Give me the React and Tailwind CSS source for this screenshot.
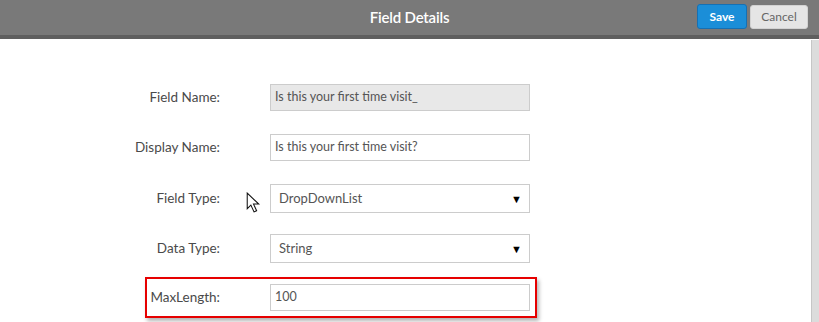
const rows = [
  { label: 'Field Name:', value: 'Is this your first time visit_', kind: 'readonly' },
  { label: 'Display Name:', value: 'Is this your first time visit?', kind: 'text' },
  { label: 'Field Type:', value: 'DropDownList', kind: 'select' },
  { label: 'Data Type:', value: 'String', kind: 'select' },
];

function Cursor() {
  return (
    <svg width="15" height="23" viewBox="0 0 14 22" className="absolute left-[-25px] top-[7px]">
      <path d="M1 1 L1 16 L4.5 12.5 L7.5 19 L10 18 L7 11.5 L12 11.5 Z" fill="#fff" stroke="#111" strokeWidth="1" strokeLinejoin="miter" />
    </svg>
  );
}

function Field({ row, index }) {
  if (row.kind === 'select') {
    return (
      <div className="relative flex items-center w-[260px] h-[29px] mt-[3px] border border-[#cccccc] bg-white pl-[8px] pr-[7px]">
        {index === 2 && <Cursor />}
        <span className="flex-1 text-[13px] text-[#555]">{row.value}</span>
        <span className="text-[11px] text-black leading-none">▼</span>
      </div>
    );
  }
  return (
    <div className={`flex items-center w-[260px] h-[27px] border border-[#cccccc] pl-[4px] text-[12.5px] text-[#555] ${row.kind === 'readonly' ? 'bg-[#e8e8e8]' : 'bg-white'}`}>
      {row.value}
    </div>
  );
}

export default function App() {
  return (
    <div className="w-[819px] h-[322px] overflow-hidden bg-white flex flex-col" style={{ fontFamily: 'Lato, "Open Sans", sans-serif' }}>
      {/* Header */}
      <div className="flex items-center h-[35px] bg-[#797979] relative shrink-0">
        <div className="flex-1 text-center text-white text-[15px] font-semibold tracking-[-0.2px]">Field Details</div>
        <div className="absolute right-[11px] top-[4px] flex gap-[3px]">
          <button className="w-[50px] h-[25px] rounded-[3px] bg-[#1b8ed8] border border-[#1670b3] text-white text-[12px] font-bold">Save</button>
          <button className="w-[58px] h-[24px] rounded-[3px] bg-[#e5e5e5] border border-[#d2d2d2] text-[#666] text-[12px] mt-[1px]">Cancel</button>
        </div>
      </div>
      <div className="h-[4px] bg-[#5f5f5f] shrink-0" />

      <div className="flex flex-1">
        <div className="flex-1 pt-[33px] pl-[120px]">
          {rows.map((row, i) => (
            <div key={row.label} className="flex items-center h-[50px]">
              <div className={`w-[100px] text-right text-[13.5px] text-[#4a4a4a] ${row.kind === 'select' ? 'mt-[3px]' : ''}`}>{row.label}</div>
              <div className="ml-[50px]">
                <Field row={row} index={i} />
              </div>
            </div>
          ))}
          <div className="flex items-center h-[50px]">
            <div className="ml-[25px] flex items-center h-[41px] w-[392px] border-2 border-[#e60000] shadow-[2px_3px_4px_rgba(0,0,0,0.3)]">
              <div className="w-[73px] text-right text-[13.5px] text-[#4a4a4a]">MaxLength:</div>
              <div className="ml-[50px] flex items-center w-[260px] h-[27px] border border-[#cccccc] pl-[4px] text-[12.5px] text-[#555]">100</div>
            </div>
          </div>
        </div>
        <div className="w-[8px] mt-[1px] bg-[#dcdcdc] border-l border-[#c6c6c6]" />
      </div>
    </div>
  );
}
